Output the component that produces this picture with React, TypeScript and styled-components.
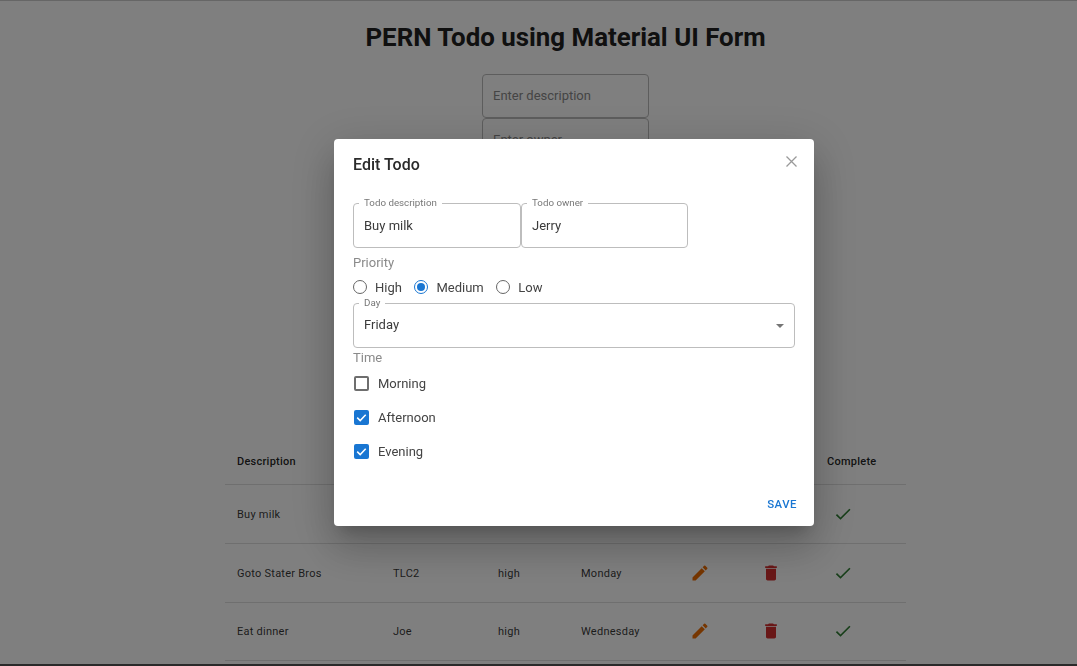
import React from "react";
import styled, { createGlobalStyle } from "styled-components";

const Global = createGlobalStyle`
  html, body { margin: 0; padding: 0; height: 100%; overflow: hidden; background: #fff; }
  #root { height: 100%; }
  * { box-sizing: border-box; }
  body { font-family: Roboto, "Liberation Sans", sans-serif; color: rgba(0,0,0,.87); }
`;

const Page = styled.div`
  height: 666px;
  overflow: hidden;
  padding-left: 54px;
  border-top: 1px solid #ccc;
  border-bottom: 2px solid #555;
  display: flex;
  flex-direction: column;
  align-items: center;
`;
const Heading = styled.h1`
  margin: 20px 0 20px;
  font-size: 25.86px;
  line-height: 33px;
  font-weight: 700;
  color: #212121;
  text-align: center;
`;
const TodoForm = styled.div`
  width: 167px;
  height: 352px;
  display: flex;
  flex-direction: column;
  flex: none;
`;
const PlainInput = styled.div`
  height: 44px;
  flex: none;
  border: 1px solid #bbb;
  border-radius: 4px;
  padding: 0 10px 2px;
  margin-bottom: 1px;
  display: flex;
  align-items: center;
  font-size: 13px;
  color: #8a8a8a;
  &:first-child { margin-bottom: 0; }
`;
const Table = styled.table`
  width: 681px;
  border-collapse: collapse;
  table-layout: fixed;
  font-size: 11px;
  letter-spacing: .25px;
  flex: none;
`;
const Th = styled.th`
  height: 58px;
  padding: 14px 0 0 12px;
  text-align: left;
  font-weight: 500;
  color: rgba(0,0,0,.87);
  border-bottom: 1px solid #dfdfdf;
`;
const Row = styled.tr`
  &:last-child td { height: 58px; }
`;
const Td = styled.td`
  height: 59px;
  padding: 1px 0 0 12px;
  border-bottom: 1px solid #dfdfdf;
  color: rgba(0,0,0,.8);
`;
const IconCell = styled(Td)<{ $pad: number }>`
  padding: 0 0 0 ${(p) => p.$pad}px;
  line-height: 0;
`;

const Overlay = styled.div`
  position: fixed;
  inset: 0;
  background: rgba(0, 0, 0, .5);
`;
const Dialog = styled.div`
  position: fixed;
  left: 334px;
  top: 139px;
  width: 480px;
  height: 387px;
  background: #fff;
  border-radius: 4px;
  box-shadow: 0 11px 15px -7px rgba(0,0,0,.2), 0 24px 38px 3px rgba(0,0,0,.14), 0 9px 46px 8px rgba(0,0,0,.12);
  display: flex;
  flex-direction: column;
`;
const DialogTitle = styled.h2`
  margin: 0;
  padding: 16px 19px 0;
  height: 64px;
  font-size: 16px;
  line-height: 20px;
  font-weight: 500;
  color: #2b2b2b;
  flex: none;
`;
const Close = styled.button`
  position: absolute;
  right: 15px;
  top: 15px;
  width: 15px;
  height: 15px;
  padding: 0;
  border: 0;
  background: none;
  line-height: 0;
`;
const DialogBody = styled.div`
  padding: 0 19px;
  display: flex;
  flex-direction: column;
  flex: 1;
`;
const FieldRow = styled.div`
  display: flex;
`;
const Field = styled.div<{ $w: string; $h: number }>`
  position: relative;
  padding: 0 10px;
  width: ${(p) => p.$w};
  height: ${(p) => p.$h}px;
  border: 1px solid #bdbdbd;
  border-radius: 4px;
  display: flex;
  align-items: center;
  font-size: 13px;
  color: #3b3b3b;
  flex: none;
`;
const FloatLabel = styled.span`
  position: absolute;
  left: 5px;
  top: -7px;
  padding: 0 5px;
  background: #fff;
  font-size: 9.75px;
  line-height: 12px;
  color: #777;
`;
const GroupLabel = styled.div<{ $top: number }>`
  margin-top: ${(p) => p.$top}px;
  font-size: 13px;
  line-height: 15px;
  color: #8a8a8a;
`;
const RadioRow = styled.div`
  display: flex;
  align-items: center;
  margin-top: 9px;
  height: 16px;
  margin-bottom: 8px;
`;
const RadioItem = styled.label`
  display: flex;
  align-items: center;
  gap: 8px;
  margin-right: 12.5px;
  font-size: 13px;
  color: #444;
`;
const RadioDot = styled.span<{ $on?: boolean }>`
  position: relative;
  width: 14px;
  height: 14px;
  border-radius: 50%;
  border: 1.5px solid ${(p) => (p.$on ? "#1976d2" : "#666")};
  flex: none;
  &::after {
    content: "";
    display: ${(p) => (p.$on ? "block" : "none")};
    position: absolute;
    inset: 2px;
    border-radius: 50%;
    background: #1976d2;
  }
`;
const SelectBox = styled(Field)`
  justify-content: space-between;
  padding-bottom: 2px;
`;
const Caret = styled.span`
  border-left: 4px solid transparent;
  border-right: 4px solid transparent;
  border-top: 4px solid #757575;
  margin-top: 3px;
`;
const CheckList = styled.div`
  display: flex;
  flex-direction: column;
  margin-top: 1px;
`;
const CheckRow = styled.label`
  height: 34px;
  display: flex;
  align-items: center;
  gap: 9px;
  font-size: 13px;
  color: #444;
`;
const Box = styled.span<{ $on?: boolean }>`
  width: 15px;
  height: 15px;
  margin-left: 1px;
  border-radius: 2px;
  flex: none;
  background: ${(p) => (p.$on ? "#1976d2" : "#fff")};
  border: ${(p) => (p.$on ? "0" : "2px solid #6e6e6e")};
  line-height: 0;
`;
const Actions = styled.div`
  display: flex;
  justify-content: flex-end;
  padding: 0 17px 15px;
`;
const SaveButton = styled.button`
  border: 0;
  background: none;
  padding: 0;
  font: 500 11.4px/14px Roboto, sans-serif;
  letter-spacing: .5px;
  color: #1976d2;
`;

const Pencil = () => (
  <svg width="20" height="20" viewBox="0 0 24 24" fill="#ed6c02">
    <path d="M3 17.25V21h3.75L17.81 9.94l-3.75-3.75zM20.71 7.04a.996.996 0 0 0 0-1.41l-2.34-2.34a.996.996 0 0 0-1.41 0l-1.83 1.83 3.75 3.75z" />
  </svg>
);
const Trash = () => (
  <svg width="20" height="20" viewBox="0 0 24 24" fill="#d32f2f">
    <path d="M6 19c0 1.1.9 2 2 2h8c1.1 0 2-.9 2-2V7H6zM19 4h-3.5l-1-1h-5l-1 1H5v2h14z" />
  </svg>
);
const Tick = () => (
  <svg width="20" height="20" viewBox="0 0 24 24" fill="#2e7d32">
    <path d="M9 16.17 4.83 12l-1.42 1.41L9 19 21 7l-1.41-1.41z" />
  </svg>
);
const BoxTick = () => (
  <svg width="15" height="15" viewBox="0 0 15 15" fill="none" stroke="#fff" strokeWidth="1.5">
    <path d="M3.2 7.6l3 3 5.5-5.8" />
  </svg>
);

const rows = [
  ["Buy milk", "Jerry", "medium", "Friday"],
  ["Goto Stater Bros", "TLC2", "high", "Monday"],
  ["Eat dinner", "Joe", "high", "Wednesday"],
];

export default function App() {
  return (
    <>
      <Global />
      <Page>
        <Heading>PERN Todo using Material UI Form</Heading>
        <TodoForm>
          <PlainInput>Enter description</PlainInput>
          <PlainInput>Enter owner</PlainInput>
        </TodoForm>
        <Table>
          <colgroup>
            <col style={{ width: 156 }} />
            <col style={{ width: 105 }} />
            <col style={{ width: 83 }} />
            <col style={{ width: 98 }} />
            <col style={{ width: 73 }} />
            <col style={{ width: 75 }} />
            <col style={{ width: 91 }} />
          </colgroup>
          <thead>
            <tr>
              <Th>Description</Th>
              <Th>Owner</Th>
              <Th>Priority</Th>
              <Th>Day</Th>
              <Th>Edit</Th>
              <Th>Delete</Th>
              <Th>Complete</Th>
            </tr>
          </thead>
          <tbody>
            {rows.map((r) => (
              <Row key={r[0]}>
                {r.map((c) => (
                  <Td key={c}>{c}</Td>
                ))}
                <IconCell $pad={23}><Pencil /></IconCell>
                <IconCell $pad={21}><Trash /></IconCell>
                <IconCell $pad={18}><Tick /></IconCell>
              </Row>
            ))}
          </tbody>
        </Table>
      </Page>
      <Overlay />
      <Dialog>
        <DialogTitle>Edit Todo</DialogTitle>
        <Close aria-label="close">
          <svg width="15" height="15" viewBox="0 0 15 15" stroke="#999" strokeWidth="1.3" fill="none">
            <path d="M2.5 2.5l10 10M12.5 2.5l-10 10" />
          </svg>
        </Close>
        <DialogBody>
          <FieldRow>
            <Field $w="168px" $h={45}>
              <FloatLabel>Todo description</FloatLabel>
              Buy milk
            </Field>
            <Field $w="167px" $h={45}>
              <FloatLabel>Todo owner</FloatLabel>
              Jerry
            </Field>
          </FieldRow>
          <GroupLabel $top={7}>Priority</GroupLabel>
          <RadioRow>
            <RadioItem><RadioDot />High</RadioItem>
            <RadioItem><RadioDot $on />Medium</RadioItem>
            <RadioItem><RadioDot />Low</RadioItem>
          </RadioRow>
          <SelectBox $w="442px" $h={45}>
            <FloatLabel>Day</FloatLabel>
            Friday
            <Caret />
          </SelectBox>
          <GroupLabel $top={2}>Time</GroupLabel>
          <CheckList>
            <CheckRow><Box />Morning</CheckRow>
            <CheckRow><Box $on><BoxTick /></Box>Afternoon</CheckRow>
            <CheckRow><Box $on><BoxTick /></Box>Evening</CheckRow>
          </CheckList>
        </DialogBody>
        <Actions>
          <SaveButton>SAVE</SaveButton>
        </Actions>
      </Dialog>
    </>
  );
}
